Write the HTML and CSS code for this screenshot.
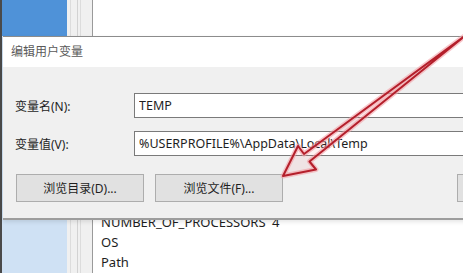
FILE: index.html
```html
<!DOCTYPE html>
<html lang="zh-CN">
<head>
  <meta charset="UTF-8" />
  <meta name="viewport" content="width=device-width, initial-scale=1" />
  <title>编辑用户变量</title>
  <link rel="stylesheet" href="styles.css">
</head>
<body>
  <div class="screen">
    <div class="window">
      <div class="edge"></div>
      <div class="nav">
        <div class="nav-selected"></div>
      </div>
      <div class="splitter">
        <div class="split-line a"></div>
        <div class="split-line b"></div>
        <div class="split-line c"></div>
      </div>
      <ul class="var-list">
        <li><span class="var-name">NUMBER_OF_PROCESSORS</span><span>4</span></li>
        <li><span class="var-name">OS</span></li>
        <li><span class="var-name">Path</span></li>
      </ul>
    </div>

    <div class="dialog">
      <div class="dialog-title">编辑用户变量</div>
      <div class="dialog-body">
        <div class="field">
          <label for="varName">变量名(N):</label>
          <input type="text" id="varName" value="TEMP" />
        </div>
        <div class="field">
          <label for="varValue">变量值(V):</label>
          <input type="text" id="varValue" value="%USERPROFILE%\AppData\Local\Temp" />
        </div>
        <div class="buttons">
          <button type="button">浏览目录(D)...</button>
          <button type="button">浏览文件(F)...</button>
          <div class="spacer"></div>
          <button type="button" class="cut" aria-label="确定"></button>
        </div>
      </div>
    </div>

    <svg class="arrow" width="463" height="273" viewBox="0 0 463 273">
      <polygon class="arrow-glow" points="283,176 298,146 304,154 466,35 309.5,161.5 316,169.5" />
      <polygon class="arrow-line" points="283,176 298,146 304,154 466,35 309.5,161.5 316,169.5" />
    </svg>
  </div>
</body>
</html>
```

FILE: styles.css
```css
* {
  margin: 0;
  padding: 0;
  box-sizing: border-box;
}

body, html {
  width: 463px;
  height: 273px;
  overflow: hidden;
  font-family: "Noto Sans", "Noto Sans CJK SC", sans-serif;
  color: #1e1e1e;
}

.screen {
  position: relative;
  width: 463px;
  height: 273px;
  overflow: hidden;
}

.window {
  display: flex;
  height: 100%;
  background: #fff;
}

.edge {
  width: 2px;
  background: #4a4a4a;
}

.nav {
  width: 65px;
  background: #cfe1f4;
}

.nav-selected {
  height: 36px;
  background: #4f92d8;
}

.splitter {
  width: 26px;
  background: #f0f0f0;
  border-right: 1px solid #9a9a9a;
  display: flex;
}

.split-line {
  width: 1px;
  background: #dcdcdc;
}

.split-line.a { margin-left: 3px; }
.split-line.b { margin-left: 6px; background: #d2d2d2; }
.split-line.c { margin-left: 2px; }

.var-list {
  list-style: none;
  flex: 1;
  padding: 212px 0 0 8px;
  font-size: 13px;
}

.var-list li {
  height: 20px;
  line-height: 20px;
  display: flex;
}

.var-name {
  width: 171px;
}

/* dialog over the window */
.dialog {
  position: absolute;
  top: 36px;
  left: 3px;
  width: 480px;
  height: 184px;
  border-top: 1px solid #8c8c8c;
  border-bottom: 2px solid #9d9d9d;
  background: #f0f0f0;
  box-shadow: 0 2px 4px rgba(0, 0, 0, 0.1);
  display: flex;
  flex-direction: column;
}

.dialog-title {
  height: 30px;
  background: #fff;
  padding-left: 8px;
  line-height: 30px;
  font-size: 12px;
  color: #5a5a5a;
}

.dialog-body {
  padding: 26px 0 0 12px;
  display: flex;
  flex-direction: column;
}

.field {
  display: flex;
  align-items: center;
  height: 25px;
  margin-bottom: 13px;
}

.field label {
  width: 119px;
  flex-shrink: 0;
  font-size: 12px;
}

.field input {
  flex: 1;
  height: 25px;
  border: 1px solid #7a7a7a;
  background: #fff;
  padding: 0 4px 1px;
  font-family: "Noto Sans", "Noto Sans CJK SC", sans-serif;
  font-size: 12.5px;
  color: #1e1e1e;
}

.buttons {
  display: flex;
  margin-top: 5px;
  padding-left: 1px;
  gap: 11px;
}

.buttons button {
  width: 128px;
  height: 28px;
  flex-shrink: 0;
  background: #e1e1e1;
  border: 1px solid #adadad;
  font-family: "Noto Sans", "Noto Sans CJK SC", sans-serif;
  font-size: 12px;
  color: #1e1e1e;
}

.spacer {
  width: 152px;
  flex-shrink: 0;
}

.arrow {
  position: absolute;
  top: 0;
  left: 0;
  pointer-events: none;
}

.arrow-glow {
  fill: none;
  stroke: #f3a0a6;
  stroke-width: 5;
  stroke-linejoin: round;
  opacity: 0.6;
}

.arrow-line {
  fill: rgba(230, 90, 100, 0.08);
  stroke: #b41f2b;
  stroke-width: 2;
  stroke-linejoin: round;
}
```
